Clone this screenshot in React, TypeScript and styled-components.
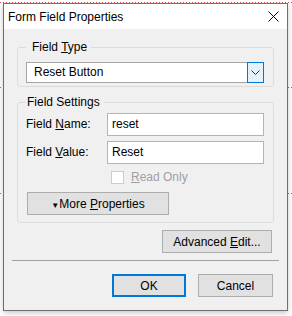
import styled, { createGlobalStyle } from 'styled-components'

const GlobalStyle = createGlobalStyle`
  html, body {
    margin: 0;
    padding: 0;
  }
  body {
    width: 292px;
    height: 316px;
    overflow: hidden;
    background-color: #fff;
    background-image:
      repeating-linear-gradient(90deg, #e05050 0 1px, transparent 1px 3px),
      repeating-linear-gradient(90deg, #e05050 0 1px, transparent 1px 3px),
      repeating-linear-gradient(90deg, #e05050 0 1px, transparent 1px 3px);
    background-size: 100% 1px;
    background-position: 0 2px, 0 87px, 0 193px;
    background-repeat: no-repeat;
    font-family: "Liberation Sans", Arial, sans-serif;
    font-size: 12px;
    color: #000;
  }
`

const Dialog = styled.div`
  margin: 3px 0 0 3px;
  width: 285px;
  height: 308px;
  box-sizing: border-box;
  border: 1px solid #6f6f6f;
  box-shadow: 0 2px 5px rgba(0, 0, 0, 0.22);
  display: flex;
  flex-direction: column;
  background: #f0f0f0;
`

const TitleBar = styled.div`
  height: 25px;
  background: #fff;
  display: flex;
  align-items: center;
  justify-content: space-between;
  padding: 0 8px 0 4px;
  font-size: 12px;
`

const CloseIcon = () => (
  <svg width="11" height="11" viewBox="0 0 11 11">
    <path d="M0.5 0.5 L10.5 10.5 M10.5 0.5 L0.5 10.5" stroke="#000" strokeWidth="1" />
  </svg>
)

const Body = styled.div`
  flex: 1;
  padding: 11px 13px 13px 13px;
  display: flex;
  flex-direction: column;
`

const Group = styled.fieldset<{ $padTop: number; $legendPad: number; $gapTop?: number }>`
  margin: ${p => p.$gapTop ?? 0}px 0 0 0;
  border: 1px solid #dcdcdc;
  border-radius: 3px;
  padding: ${p => p.$padTop}px 9px 3px 8px;
  min-width: 0;

  & > legend {
    padding: 0 4px 0 ${p => p.$legendPad}px;
    line-height: 15px;
    font-size: 12px;
  }
`

const SelectBox = styled.div`
  height: 21px;
  box-sizing: border-box;
  border: 1px solid #a6a6a6;
  background: #fff;
  display: flex;
  align-items: stretch;
  padding-left: 7px;
`

const SelectText = styled.span`
  flex: 1;
  line-height: 19px;
`

const DropButton = styled.span`
  width: 17px;
  margin: -1px -1px -1px 0;
  box-sizing: border-box;
  border: 1px solid #0078d7;
  background: #e5f1fb;
  display: flex;
  align-items: center;
  justify-content: center;
`

const SettingsGrid = styled.div`
  display: grid;
  grid-template-columns: 81px 1fr;
  row-gap: 5px;
  align-items: center;
  padding-bottom: 4px;
`

const Label = styled.label`
  line-height: 15px;
`

const TextInput = styled.div`
  height: 23px;
  box-sizing: border-box;
  border: 1px solid #b4b4b4;
  background: #fff;
  padding-left: 4px;
  line-height: 21px;
`

const CheckRow = styled.div`
  grid-column: 2;
  display: flex;
  align-items: center;
  gap: 7px;
  padding-left: 4px;
  margin-top: 1px;
  color: #a0a0a0;
`

const CheckBox = styled.span`
  width: 13px;
  height: 13px;
  box-sizing: border-box;
  border: 1px solid #cccccc;
  background: #fff;
`

const Button = styled.button<{ $width: number; $primary?: boolean }>`
  width: ${p => p.$width}px;
  height: 23px;
  box-sizing: border-box;
  padding: 0;
  font-family: inherit;
  font-size: 12px;
  color: #000;
  background: #e1e1e1;
  border: ${p => (p.$primary ? '2px solid #0078d7' : '1px solid #adadad')};
  display: flex;
  align-items: center;
  justify-content: center;
  white-space: pre;
`

const MoreButton = styled(Button)`
  grid-column: 1 / span 2;
  margin: 3px 0 0 1px;
`

const Caret = styled.span`
  font-size: 8px;
`

const AdvancedRow = styled.div`
  display: flex;
  justify-content: flex-end;
  margin: 7px 2px 0 0;
`

const Separator = styled.div`
  height: 1px;
  background: #a0a0a0;
  margin: auto -5px 0 -5px;
`

const Footer = styled.div`
  display: flex;
  justify-content: flex-end;
  gap: 12px;
  margin: 13px 1px 0 0;
`

export default function App() {
  return (
    <>
      <GlobalStyle />
      <Dialog>
        <TitleBar>
          <span>Form Field Properties</span>
          <CloseIcon />
        </TitleBar>
        <Body>
          <Group $padTop={7} $legendPad={6}>
            <legend>
              Field <u>T</u>ype
            </legend>
            <SelectBox>
              <SelectText>Reset Button</SelectText>
              <DropButton>
                <svg width="9" height="5" viewBox="0 0 9 5">
                  <path d="M0.5 0.5 L4.5 4.5 L8.5 0.5" stroke="#333" strokeWidth="1" fill="none" />
                </svg>
              </DropButton>
            </SelectBox>
          </Group>
          <Group $padTop={3} $legendPad={1} $gapTop={8}>
            <legend>Field Settings</legend>
            <SettingsGrid>
              <Label>
                Field <u>N</u>ame:
              </Label>
              <TextInput>reset</TextInput>
              <Label>
                Field <u>V</u>alue:
              </Label>
              <TextInput>Reset</TextInput>
              <CheckRow>
                <CheckBox />
                <span>
                  <u>R</u>ead Only
                </span>
              </CheckRow>
              <MoreButton $width={142}>
                <span>
                  <Caret>▼</Caret>More <u>P</u>roperties
                </span>
              </MoreButton>
            </SettingsGrid>
          </Group>
          <AdvancedRow>
            <Button $width={110}>
              <span>
                Advanced <u>E</u>dit...
              </span>
            </Button>
          </AdvancedRow>
          <Separator />
          <Footer>
            <Button $width={74} $primary>
              OK
            </Button>
            <Button $width={75}>Cancel</Button>
          </Footer>
        </Body>
      </Dialog>
    </>
  )
}
